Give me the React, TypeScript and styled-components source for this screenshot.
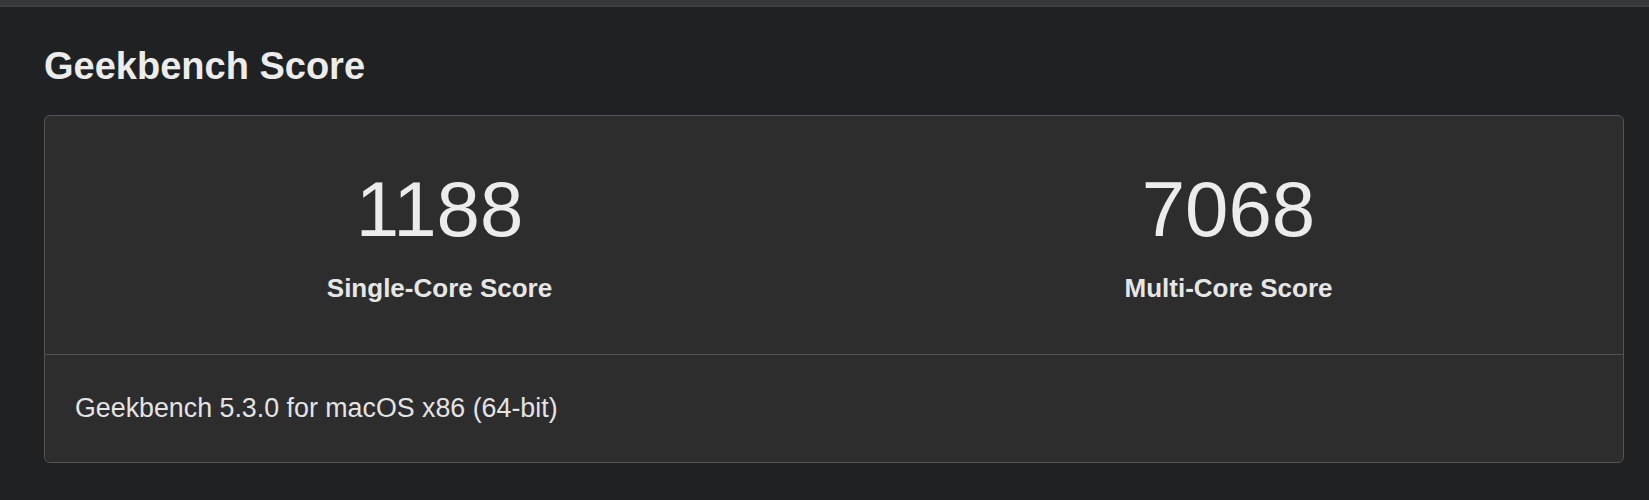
import React from 'react';
import styled, { createGlobalStyle } from 'styled-components';

const GlobalStyle = createGlobalStyle`
  html, body {
    margin: 0;
    padding: 0;
    background: #202123;
  }
  body {
    font-family: 'Liberation Sans', Arial, Helvetica, sans-serif;
    color: #ebebeb;
  }
`;

type Score = { value: number; label: string };

const SCORES: Score[] = [
  { value: 1188, label: 'Single-Core Score' },
  { value: 7068, label: 'Multi-Core Score' },
];

const Page = styled.div`
  width: 1649px;
  height: 500px;
  overflow: hidden;
  background: #202123;
`;

const TopBar = styled.div`
  height: 5px;
  background: #37383a;
  border-bottom: 2px solid #3f4042;
`;

const Section = styled.section`
  padding: 40px 25px 0 44px;
`;

const Title = styled.h2`
  margin: 0 0 30px;
  font-size: 38px;
  line-height: 38px;
  font-weight: 700;
  color: #ececec;
`;

const Card = styled.div`
  background: #2d2d2e;
  border: 1px solid #545455;
  border-radius: 6px;
  overflow: hidden;
`;

const ScoreRow = styled.div`
  display: grid;
  grid-template-columns: 1fr 1fr;
  border-bottom: 1px solid #555556;
`;

const ScoreCell = styled.div`
  display: flex;
  flex-direction: column;
  align-items: center;
  padding: 54px 0 53px;
`;

const ScoreValue = styled.div`
  font-size: 78px;
  line-height: 78px;
  font-weight: 400;
  color: #ececec;
`;

const ScoreLabel = styled.div`
  margin-top: 27px;
  font-size: 26px;
  line-height: 26px;
  font-weight: 700;
  color: #e6e6e6;
`;

const Footer = styled.div`
  padding: 40px 30px 41px;
  font-size: 26.8px;
  line-height: 26px;
  color: #e4e4e4;
`;

export default function App() {
  return (
    <Page>
      <GlobalStyle />
      <TopBar />
      <Section>
        <Title>Geekbench Score</Title>
        <Card>
          <ScoreRow>
            {SCORES.map((s) => (
              <ScoreCell key={s.label}>
                <ScoreValue>{s.value}</ScoreValue>
                <ScoreLabel>{s.label}</ScoreLabel>
              </ScoreCell>
            ))}
          </ScoreRow>
          <Footer>Geekbench 5.3.0 for macOS x86 (64-bit)</Footer>
        </Card>
      </Section>
    </Page>
  );
}
